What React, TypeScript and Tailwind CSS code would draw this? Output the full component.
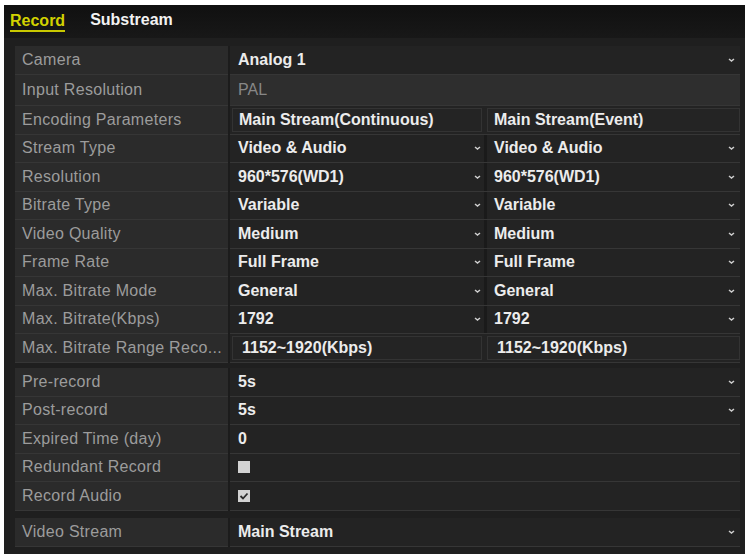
import type { ReactNode } from "react";

const Chevron = () => (
  <svg width="7" height="4" viewBox="0 0 7 4" className="shrink-0">
    <path d="M1 1l2.5 2 2.5-2" fill="none" stroke="#cfcfcf" strokeWidth="1.5" />
  </svg>
);

function Row({ label, h, children }: { label: string; h: string; children: ReactNode }) {
  return (
    <div className={`flex ${h}`}>
      <div className="w-[213px] shrink-0 flex items-center pl-[7px] bg-[#2b2b2b] border-b border-[#363636] text-[#9c9c9c] tracking-[0.3px] whitespace-nowrap overflow-hidden">
        {label}
      </div>
      <div className="w-[2px] shrink-0 bg-[#1c1c1c]" />
      <div className="flex-1 flex border-b border-[#363636] bg-[#232323]">{children}</div>
    </div>
  );
}

// one value cell, full width, with optional dropdown arrow
function Full({ text, arrow }: { text?: ReactNode; arrow?: boolean }) {
  return (
    <div className="flex-1 flex items-center justify-between pl-2 pr-[5px] font-bold text-[#ececec]">
      <span>{text}</span>
      {arrow && <Chevron />}
    </div>
  );
}

// two dropdown cells (main stream / event)
function Pair({ a, b }: { a: string; b: string }) {
  return (
    <>
      <div className="w-[254px] shrink-0 flex items-center justify-between pl-2 pr-[3px] font-bold text-[#ececec]">
        <span>{a}</span>
        <Chevron />
      </div>
      <div className="w-[3px] shrink-0 bg-[#1a1a1a]" />
      <div className="flex-1 flex items-center justify-between pl-[7px] pr-[5px] font-bold text-[#ececec]">
        <span>{b}</span>
        <Chevron />
      </div>
    </>
  );
}

// two plain boxed cells
function Boxed({ a, b, pad }: { a: string; b: string; pad: string }) {
  return (
    <div className="flex-1 flex gap-[5px] py-[2px] pl-[2px]">
      <div className={`w-[250px] shrink-0 flex items-center ${pad} border border-[#333333] bg-[#242424] font-bold text-[#ececec]`}>
        {a}
      </div>
      <div className={`flex-1 flex items-center ${pad} border border-[#333333] bg-[#242424] font-bold text-[#ececec]`}>
        {b}
      </div>
    </div>
  );
}

const streamRows: [string, string][] = [
  ["Stream Type", "Video & Audio"],
  ["Resolution", "960*576(WD1)"],
  ["Bitrate Type", "Variable"],
  ["Video Quality", "Medium"],
  ["Frame Rate", "Full Frame"],
  ["Max. Bitrate Mode", "General"],
  ["Max. Bitrate(Kbps)", "1792"],
];

export default function App() {
  return (
    <div className="w-[748px] h-[554px] bg-white pt-[5px] pl-[4px] pr-[3px] overflow-hidden font-['Liberation_Sans',Arial,sans-serif] text-[16px]">
      <div className="h-[549px] bg-[#1f1f1f] flex flex-col">
        {/* tabs */}
        <div className="h-[33px] shrink-0 flex items-center gap-[25px] pl-[6px] bg-gradient-to-b from-[#101010] to-[#181818] font-bold">
          <span className="text-[#d2d200] border-b-2 border-[#c8c800] leading-[18px] mt-[1px]">Record</span>
          <span className="text-[#f2f2f2] leading-[18px] pb-[3px]">Substream</span>
        </div>

        <div className="flex-1 pl-[11px] pr-[5px] pt-[8px] bg-[#1f1f1f]">
          <Row label="Camera" h="h-[29px]">
            <Full text="Analog 1" arrow />
          </Row>
          <Row label="Input Resolution" h="h-[31px]">
            <div className="flex-1 flex items-center pl-2 bg-[#2e2e2e] text-[#878787]">PAL</div>
          </Row>
          <Row label="Encoding Parameters" h="h-[28.5px]">
            <Boxed a="Main Stream(Continuous)" b="Main Stream(Event)" pad="pl-[6px]" />
          </Row>
          {streamRows.map(([l, v]) => (
            <Row key={l} label={l} h="h-[28.5px]">
              <Pair a={v} b={v} />
            </Row>
          ))}
          <Row label="Max. Bitrate Range Reco..." h="h-[28.5px]">
            <Boxed a="1152~1920(Kbps)" b="1152~1920(Kbps)" pad="pl-[9px]" />
          </Row>

          <div className="h-[5.5px]" />

          <Row label="Pre-record" h="h-[28.5px]">
            <Full text="5s" arrow />
          </Row>
          <Row label="Post-record" h="h-[28.5px]">
            <Full text="5s" arrow />
          </Row>
          <Row label="Expired Time (day)" h="h-[28.5px]">
            <Full text="0" />
          </Row>
          <Row label="Redundant Record" h="h-[28.5px]">
            <Full text={<span className="block w-[12px] h-[12px] bg-[#d2d2d2]" />} />
          </Row>
          <Row label="Record Audio" h="h-[28.5px]">
            <Full
              text={
                <span className="flex w-[12px] h-[12px] bg-[#d2d2d2] items-center justify-center">
                  <svg width="10" height="8" viewBox="0 0 10 8">
                    <path d="M1.5 4l2.5 2.5L8.5 1.5" fill="none" stroke="#2a2a2a" strokeWidth="1.8" />
                  </svg>
                </span>
              }
            />
          </Row>

          <div className="h-[7.5px]" />

          <Row label="Video Stream" h="h-[28.5px]">
            <Full text="Main Stream" arrow />
          </Row>
        </div>
      </div>
    </div>
  );
}
